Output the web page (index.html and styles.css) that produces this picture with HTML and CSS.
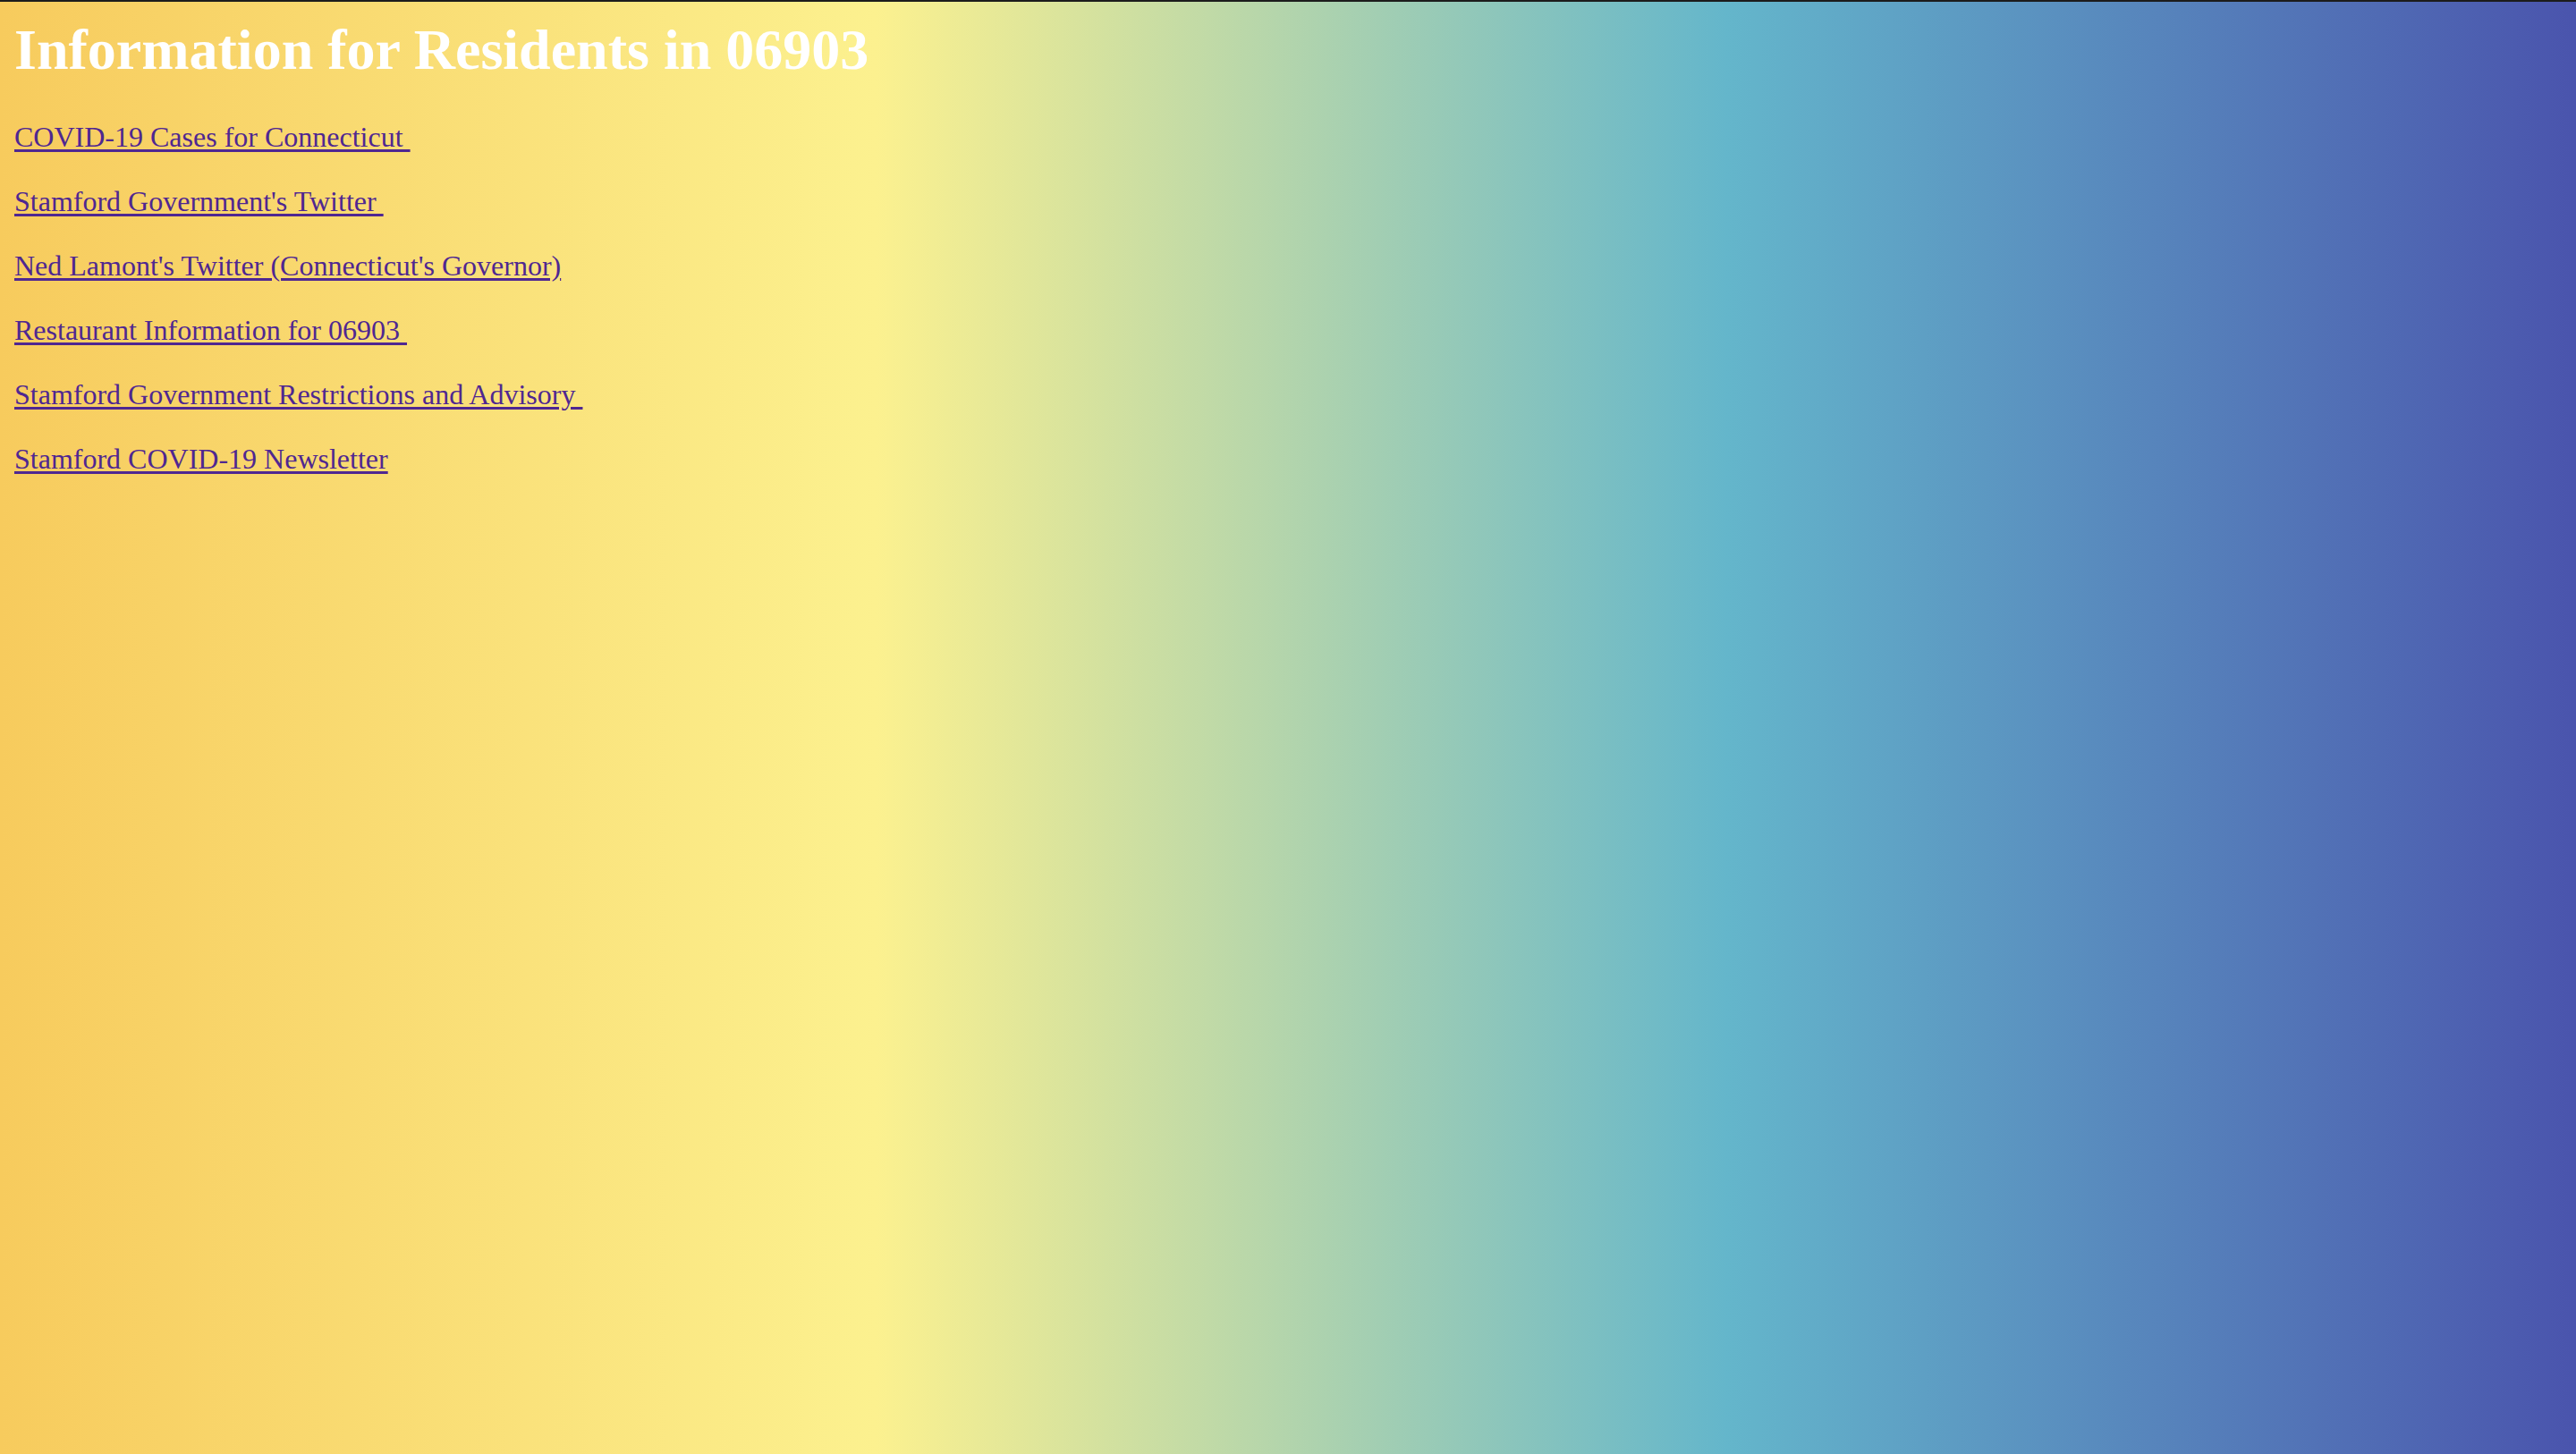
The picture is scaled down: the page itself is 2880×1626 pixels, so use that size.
FILE: index.html
```html
<!DOCTYPE html>
<html lang="en">
<head>
<meta charset="utf-8">
<title>Information for Residents in 06903</title>
<link rel="stylesheet" href="styles.css">
</head>
<body>
<div class="topline"></div>
<main class="page">
  <h1 class="title">Information for Residents in 06903</h1>
  <p class="item"><a class="link" href="#">COVID-19 Cases for Connecticut&nbsp;</a></p>
  <p class="item"><a class="link" href="#">Stamford Government's Twitter&nbsp;</a></p>
  <p class="item"><a class="link" href="#">Ned Lamont's Twitter (Connecticut's Governor)</a></p>
  <p class="item"><a class="link" href="#">Restaurant Information for 06903&nbsp;</a></p>
  <p class="item"><a class="link" href="#">Stamford Government Restrictions and Advisory&nbsp;</a></p>
  <p class="item"><a class="link" href="#">Stamford COVID-19 Newsletter</a></p>
</main>
</body>
</html>
```
FILE: styles.css
```css
html, body {
  margin: 0;
  height: 100%;
}
body {
  min-height: 1626px;
  background: linear-gradient(to right, #f7cb5d 0%, #fcf18f 34%, #64b6cb 67%, #4a54ad 100%);
  font-family: "Liberation Serif", "Times New Roman", serif;
}
.topline {
  height: 2px;
  background: #1c1c1c;
}
.page {
  padding: 0 16px;
}
.title {
  margin: 0;
  padding: 17px 0 6px;
  font-size: 64px;
  font-weight: bold;
  color: #ffffff;
  line-height: 1.15;
}
.item {
  margin: 36px 0;
  font-size: 32px;
  line-height: 36px;
}
.link {
  color: #4f2791;
  text-decoration: underline;
  text-decoration-thickness: 3px;
  text-underline-offset: 3px;
}
```
